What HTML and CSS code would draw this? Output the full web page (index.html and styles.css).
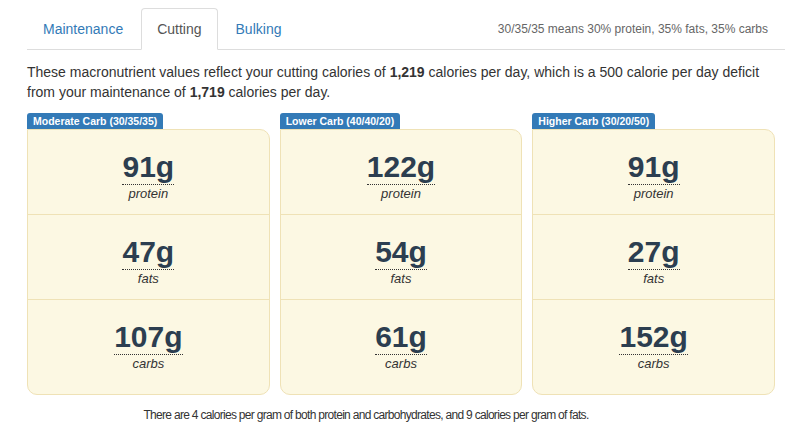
FILE: index.html
```html
<!DOCTYPE html>
<html>
<head>
<meta charset="utf-8">
<link rel="stylesheet" href="styles.css">
</head>
<body>
<div class="wrap">
  <div class="tabs">
    <ul class="nav">
      <li><a class="tab">Maintenance</a></li>
      <li><a class="tab active">Cutting</a></li>
      <li><a class="tab">Bulking</a></li>
    </ul>
    <div class="note">30/35/35 means 30% protein, 35% fats, 35% carbs</div>
  </div>
  <p class="intro">These macronutrient values reflect your cutting calories of <b>1,219</b> calories per day, which is a 500 calorie per day deficit from your maintenance of <b>1,719</b> calories per day.</p>
  <div class="plans">
    <div class="plan">
      <span class="label">Moderate Carb (30/35/35)</span>
      <div class="card">
        <div class="row"><span class="num">91g</span><span class="unit">protein</span></div>
        <div class="row"><span class="num">47g</span><span class="unit">fats</span></div>
        <div class="row last"><span class="num">107g</span><span class="unit">carbs</span></div>
      </div>
    </div>
    <div class="plan">
      <span class="label">Lower Carb (40/40/20)</span>
      <div class="card">
        <div class="row"><span class="num">122g</span><span class="unit">protein</span></div>
        <div class="row"><span class="num">54g</span><span class="unit">fats</span></div>
        <div class="row last"><span class="num">61g</span><span class="unit">carbs</span></div>
      </div>
    </div>
    <div class="plan">
      <span class="label">Higher Carb (30/20/50)</span>
      <div class="card">
        <div class="row"><span class="num">91g</span><span class="unit">protein</span></div>
        <div class="row"><span class="num">27g</span><span class="unit">fats</span></div>
        <div class="row last"><span class="num">152g</span><span class="unit">carbs</span></div>
      </div>
    </div>
  </div>
  <p class="foot">There are 4 calories per gram of both protein and carbohydrates, and 9 calories per gram of fats.</p>
</div>
</body>
</html>
```
FILE: styles.css
```css
* { box-sizing: border-box; }
body {
  margin: 0;
  font-family: "Liberation Sans", Arial, sans-serif;
  font-size: 14px;
  line-height: 20px;
  color: #333;
  background: #fff;
}
.wrap {
  padding: 8px 9px 0 27px;
}
.tabs {
  display: flex;
  align-items: center;
  justify-content: space-between;
  border-bottom: 1px solid #ddd;
}
.nav {
  list-style: none;
  margin: 0 0 -1px 0;
  padding: 0;
  display: flex;
}
.tab {
  display: block;
  padding: 10px 15px;
  margin-right: 2px;
  border: 1px solid transparent;
  border-radius: 4px 4px 0 0;
  color: #337ab7;
  line-height: 20px;
}
.tab.active {
  color: #555;
  background: #fff;
  border-color: #ddd;
  border-bottom-color: #fff;
}
.note {
  font-size: 12px;
  color: #666;
  margin-right: 17px;
}
.intro {
  margin: 12px 0 11px;
}
.plans {
  display: grid;
  grid-template-columns: repeat(3, 1fr);
}
.plan {
  display: flex;
  flex-direction: column;
  align-items: flex-start;
  padding-right: 10px;
}
.label {
  display: block;
  background: #337ab7;
  color: #fff;
  font-weight: bold;
  font-size: 10.5px;
  line-height: 11px;
  padding: 3px 6px 2px;
  border-radius: 3px 3px 0 0;
}
.card {
  align-self: stretch;
  background: #fcf8e3;
  border: 1px solid #efe2b6;
  border-radius: 0 10px 10px 10px;
}
.row {
  display: flex;
  flex-direction: column;
  align-items: center;
  padding: 20px 0 11px;
  border-bottom: 1px solid #efe2b6;
}
.row.last {
  border-bottom: 0;
  padding-bottom: 21px;
}
.num {
  font-size: 30px;
  font-weight: bold;
  line-height: 34px;
  color: #2c3e50;
  border-bottom: 1px dotted #333;
}
.unit {
  font-size: 13px;
  font-style: italic;
  line-height: 18px;
  color: #333;
}
.foot {
  margin: 10px 0 0;
  padding-right: 80px;
  font-size: 12px;
  letter-spacing: -0.7px;
  text-align: center;
}
```
